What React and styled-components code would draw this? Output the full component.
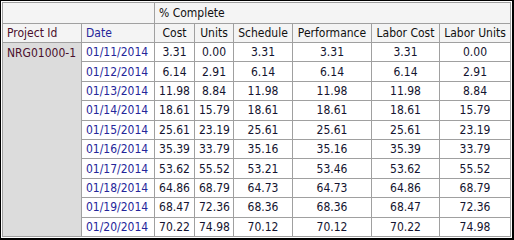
import React from 'react'
import styled, { createGlobalStyle } from 'styled-components'

const GlobalStyle = createGlobalStyle`
  html, body {
    margin: 0;
    padding: 0;
    background: #fff;
  }
`

const Frame = styled.div`
  width: 514px;
  height: 240px;
  box-sizing: border-box;
  border-style: solid;
  border-color: #000;
  border-width: 1px 2px 2px 1px;
  padding: 1px;
  background: #fff;
`

const Grid = styled.table`
  width: 509px;
  table-layout: fixed;
  border-collapse: separate;
  border-spacing: 0;
  border-top: 1px solid #a0a0a0;
  border-left: 1px solid #a0a0a0;
  font-family: "DejaVu Sans Condensed", "DejaVu Sans", Tahoma, sans-serif;
  font-size: 12px;
  color: #111;
`

const Cell = styled.td`
  box-sizing: border-box;
  border-right: 1px solid #a0a0a0;
  border-bottom: 1px solid #a0a0a0;
  padding: 0 4px;
  white-space: nowrap;
  overflow: hidden;
  vertical-align: ${p => (p.$top ? 'top' : 'middle')};
  padding-top: ${p => (p.$top ? '3px' : '0')};
  text-align: ${p => (p.$center ? 'center' : 'left')};
  background: ${p => p.$bg || '#fff'};
  color: ${p => p.$color || '#111'};
  line-height: 14px;
`

const HeadRow = styled.tr`
  height: ${p => p.$h}px;
`

const DataRow = styled.tr`
  height: 19.4px;
`

const widths = [79, 73, 40, 39, 59, 79, 68, 71]
const measures = ['Cost', 'Units', 'Schedule', 'Performance', 'Labor Cost', 'Labor Units']

const rows = [
  ['01/11/2014', '3.31', '0.00', '3.31', '3.31', '3.31', '0.00'],
  ['01/12/2014', '6.14', '2.91', '6.14', '6.14', '6.14', '2.91'],
  ['01/13/2014', '11.98', '8.84', '11.98', '11.98', '11.98', '8.84'],
  ['01/14/2014', '18.61', '15.79', '18.61', '18.61', '18.61', '15.79'],
  ['01/15/2014', '25.61', '23.19', '25.61', '25.61', '25.61', '23.19'],
  ['01/16/2014', '35.39', '33.79', '35.16', '35.16', '35.39', '33.79'],
  ['01/17/2014', '53.62', '55.52', '53.21', '53.46', '53.62', '55.52'],
  ['01/18/2014', '64.86', '68.79', '64.73', '64.73', '64.86', '68.79'],
  ['01/19/2014', '68.47', '72.36', '68.36', '68.36', '68.47', '72.36'],
  ['01/20/2014', '70.22', '74.98', '70.12', '70.12', '70.22', '74.98']
]

const HEAD_BG = '#f4f4f4'
const ID_COLOR = '#4a0f2c'
const DATE_COLOR = '#25269a'

export default function App () {
  return (
    <>
      <GlobalStyle />
      <Frame>
        <Grid>
          <colgroup>
            {widths.map((w, i) => <col key={i} style={{ width: w }} />)}
          </colgroup>
          <tbody>
            <HeadRow $h={21}>
              <Cell colSpan={2} $bg={HEAD_BG} />
              <Cell colSpan={6} $bg={HEAD_BG}>% Complete</Cell>
            </HeadRow>
            <HeadRow $h={19}>
              <Cell $bg={HEAD_BG} $color={ID_COLOR}>Project Id</Cell>
              <Cell $bg={HEAD_BG} $color={DATE_COLOR}>Date</Cell>
              {measures.map(m => (
                <Cell key={m} $bg={HEAD_BG} $center>{m}</Cell>
              ))}
            </HeadRow>
            {rows.map(([date, ...vals], i) => (
              <DataRow key={date}>
                {i === 0 && (
                  <Cell rowSpan={rows.length} $top $bg='#dcdcdc' $color={ID_COLOR}>
                    NRG01000-1
                  </Cell>
                )}
                <Cell $color={DATE_COLOR}>{date}</Cell>
                {vals.map((v, j) => (
                  <Cell key={j} $center $color='#141430'>{v}</Cell>
                ))}
              </DataRow>
            ))}
          </tbody>
        </Grid>
      </Frame>
    </>
  )
}
